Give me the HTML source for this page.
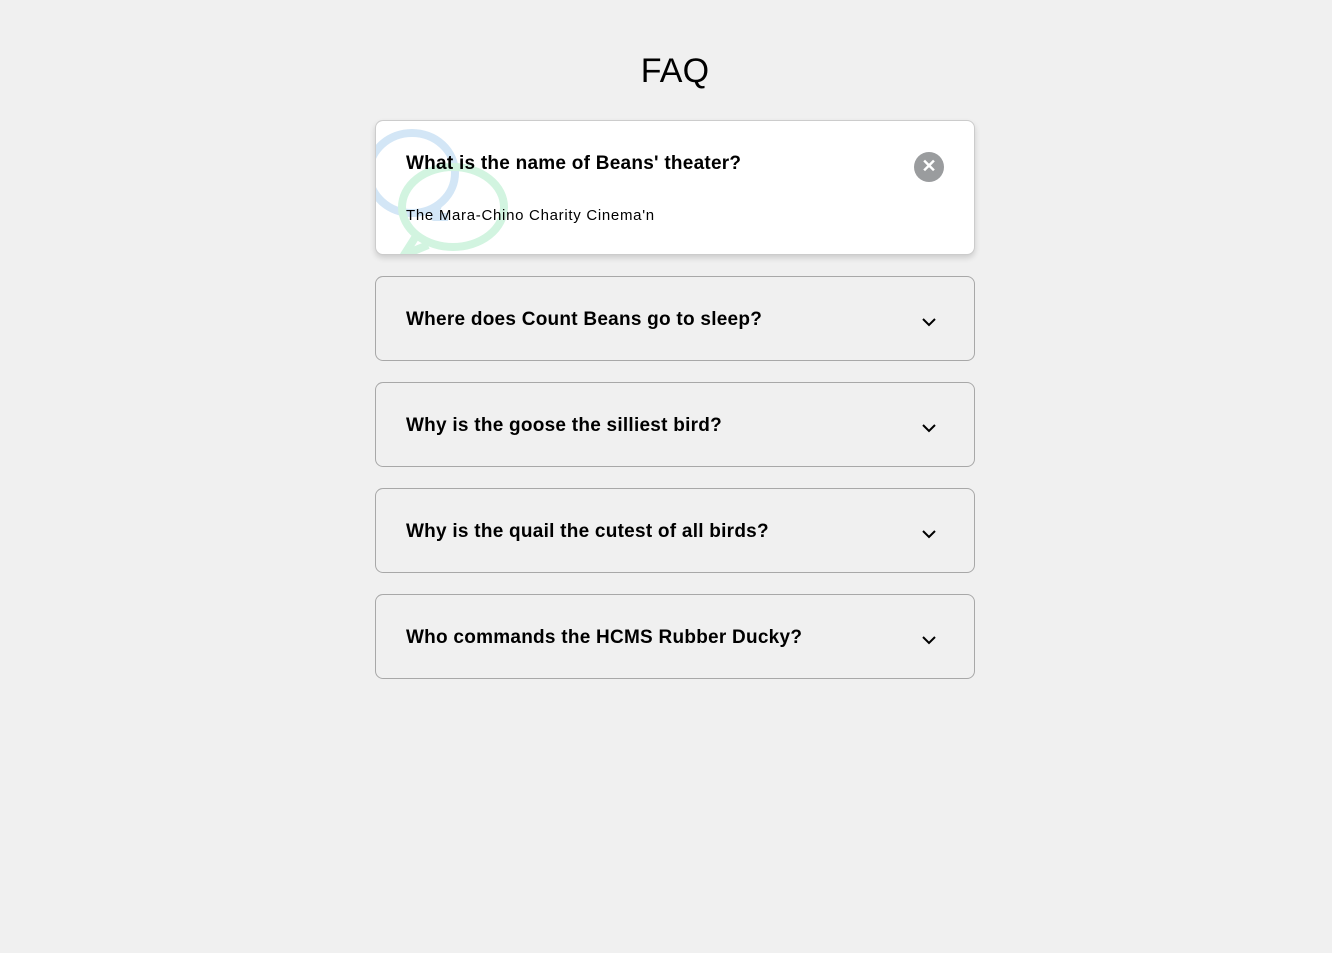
<!DOCTYPE html>
<html><head><style>
body{margin:0;background:#f0f0f0;font-family:"Liberation Sans",sans-serif;color:#000;}
h1{margin:0;position:absolute;top:52px;left:9px;width:100%;text-align:center;font-weight:400;font-size:34px;letter-spacing:0.2px}
.c{position:absolute;left:375px;width:598px;border:1px solid #a8a8a8;border-radius:8px;overflow:hidden;}
.q{position:absolute;left:30px;font-weight:bold;font-size:19px;letter-spacing:0.25px;}
.ch{position:absolute;left:545px;top:40px;}
</style></head><body>
<h1>FAQ</h1>
<div class="c" style="top:120px;height:133px;background:#fff;border-color:#ccc;box-shadow:0 3px 6px rgba(0,0,0,0.15)">
<svg width="200" height="140" style="position:absolute;left:0;top:0" viewBox="0 0 200 140">
<ellipse cx="36" cy="52" rx="43" ry="40" fill="none" stroke="#d3e6f6" stroke-width="8"/>
<path d="M62 84 L58 96 L72 96" fill="none" stroke="#d3e6f6" stroke-width="8" stroke-linejoin="round"/>
<ellipse cx="77" cy="86" rx="51" ry="40" fill="none" stroke="#d2f4e0" stroke-width="8"/>
<path d="M42 112 L28 134 L52 124" fill="none" stroke="#d2f4e0" stroke-width="8" stroke-linejoin="round"/>
</svg>
<div class="q" style="top:32px">What is the name of Beans' theater?</div>
<div style="position:absolute;left:30px;top:86px;font-size:15px;letter-spacing:0.7px">The Mara-Chino Charity Cinema'n</div>
<div style="position:absolute;left:538px;top:31px;width:30px;height:30px;border-radius:50%;background:#9a9c9e;color:#fff;text-align:center;line-height:29px;font-size:18px;font-weight:bold">✕</div>
</div>
<div class="c" style="top:276px;height:83px"><div class="q" style="top:32px">Where does Count Beans go to sleep?</div><svg class="ch" width="16" height="10"><path d="M2 2l6 6 6-6" fill="none" stroke="#000" stroke-width="2"/></svg></div>
<div class="c" style="top:382px;height:83px"><div class="q" style="top:32px">Why is the goose the silliest bird?</div><svg class="ch" width="16" height="10"><path d="M2 2l6 6 6-6" fill="none" stroke="#000" stroke-width="2"/></svg></div>
<div class="c" style="top:488px;height:83px"><div class="q" style="top:32px">Why is the quail the cutest of all birds?</div><svg class="ch" width="16" height="10"><path d="M2 2l6 6 6-6" fill="none" stroke="#000" stroke-width="2"/></svg></div>
<div class="c" style="top:594px;height:83px"><div class="q" style="top:32px">Who commands the HCMS Rubber Ducky?</div><svg class="ch" width="16" height="10"><path d="M2 2l6 6 6-6" fill="none" stroke="#000" stroke-width="2"/></svg></div>
</body></html>
